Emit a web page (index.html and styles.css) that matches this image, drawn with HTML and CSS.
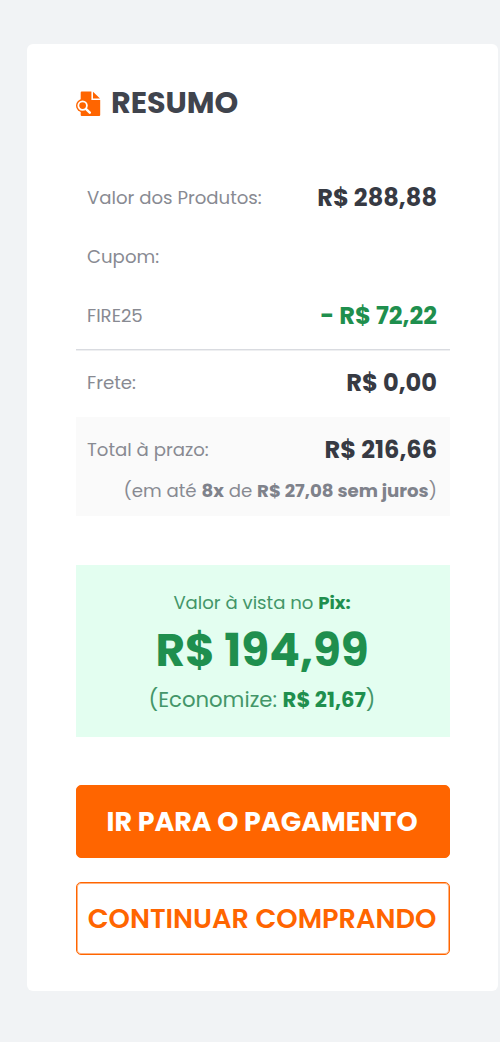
FILE: index.html
```
<!DOCTYPE html>
<html lang="pt-BR">
<head>
<meta charset="utf-8">
<title>Resumo</title>
<link rel="stylesheet" href="styles.css">
</head>
<body>
<main class="card">
  <h1 class="title">
    <svg class="title-icon" viewBox="0 0 25 26" aria-hidden="true">
      <path class="doc" d="M4.7 1.5Q4.7 .5 5.7 .5H15.4V9H24.2V24Q24.2 25 23.2 25H5.7Q4.7 25 4.7 24Z"/>
      <path class="doc" d="M17 .8 24 7.4H17Z"/>
      <circle class="rim" cx="6.6" cy="14.6" r="6.6"/>
      <path class="lens-line" d="M9.6 17.6 13.8 21.6"/>
      <circle class="lens" cx="6.6" cy="14.6" r="4.3"/>
    </svg>
    <span class="title-text">RESUMO</span>
  </h1>
  <dl class="rows">
    <div class="row item"><dt>Valor dos Produtos:</dt><dd>R$ 288,88</dd></div>
    <div class="row item"><dt>Cupom:</dt></div>
    <div class="row item"><dt>FIRE25</dt><dd class="discount">- R$ 72,22</dd></div>
    <div class="row shipping"><dt>Frete:</dt><dd>R$ 0,00</dd></div>
    <div class="total">
      <div class="row total-row"><dt>Total à prazo:</dt><dd>R$ 216,66</dd></div>
      <p class="installments">(em até <b>8x</b> de <b>R$ 27,08 sem juros</b>)</p>
    </div>
  </dl>
  <section class="pix">
    <p class="pix-label">Valor à vista no <b>Pix:</b></p>
    <p class="pix-price">R$ 194,99</p>
    <p class="pix-save">(Economize: <b>R$ 21,67</b>)</p>
  </section>
  <button class="btn primary">IR PARA O PAGAMENTO</button>
  <button class="btn outline">CONTINUAR COMPRANDO</button>
</main>
</body>
</html>
```
FILE: styles.css
```
* { box-sizing: border-box; margin: 0; padding: 0; }
body { background: #f1f3f5; font-family: Poppins, Inter, sans-serif; min-height: 1042px; padding: 44px 2px 0 27px; }
.card { background: #fff; border-radius: 6px; height: 947px; padding: 42px 48px 0 49px; }
.title { display: flex; align-items: center; gap: 10px; height: 36px; font-size: 30.2px; line-height: 36px; font-weight: 700; color: #40444d; }
.title-icon { width: 25px; height: 26px; }
.title-text { padding-bottom: 2px; line-height: 34px; }
.doc { fill: #ff6500; }
.rim { fill: #ff6500; }
.lens { fill: #ff6500; stroke: #fff; stroke-width: 1.8; }
.lens-line { fill: none; stroke: #fff; stroke-width: 2.5; stroke-linecap: round; }
.rows { padding-top: 45px; }
.row { display: flex; align-items: center; justify-content: space-between; height: 59px; padding: 0 13px 0 11px; color: #888a92; font-size: 18.15px; }
dt { white-space: nowrap; }
.item dt { padding-top: 2px; }
dd { font-size: 24.1px; font-weight: 700; color: #373a43; white-space: nowrap; }
.item dd { padding-top: 1px; }
.discount { color: #1f8f4e; }
.shipping { margin-top: 5px; height: 68px; border-top: 1px solid #d9dbe0; box-shadow: inset 0 1px #eeeff1; padding-bottom: 2px; }
.total { background: #fafafa; height: 99px; padding-top: 12px; }
.total-row { height: 40px; }
.installments { font-size: 18.15px; line-height: 43px; text-align: right; padding-right: 13px; color: #888a92; white-space: nowrap; }
.installments b { color: #7f828b; }
.pix { margin-top: 49px; height: 172px; background: #e3fef0; color: #1f8f4e; text-align: center; padding: 22px 2px 0 0; }
.pix-label { font-size: 18.1px; line-height: 32px; color: #439669; }
.pix-price { font-size: 45.3px; line-height: 63px; font-weight: 700; }
.pix-save { font-size: 21.2px; line-height: 35px; color: #439669; }
.pix b { color: #1f8f4e; }
.btn { display: flex; align-items: center; justify-content: center; width: 100%; height: 73px; border: 1px solid #ff6500; border-radius: 5px; font: 700 26.9px Poppins, Inter, sans-serif; white-space: nowrap; padding-right: 2px; }
.primary { margin-top: 48px; background: #ff6500; color: #fff; }
.outline { margin-top: 24px; background: #fff; color: #ff6500; font-size: 27.2px; font-weight: 600; box-shadow: inset 0 0 0 1px #ffb27f; }
```
